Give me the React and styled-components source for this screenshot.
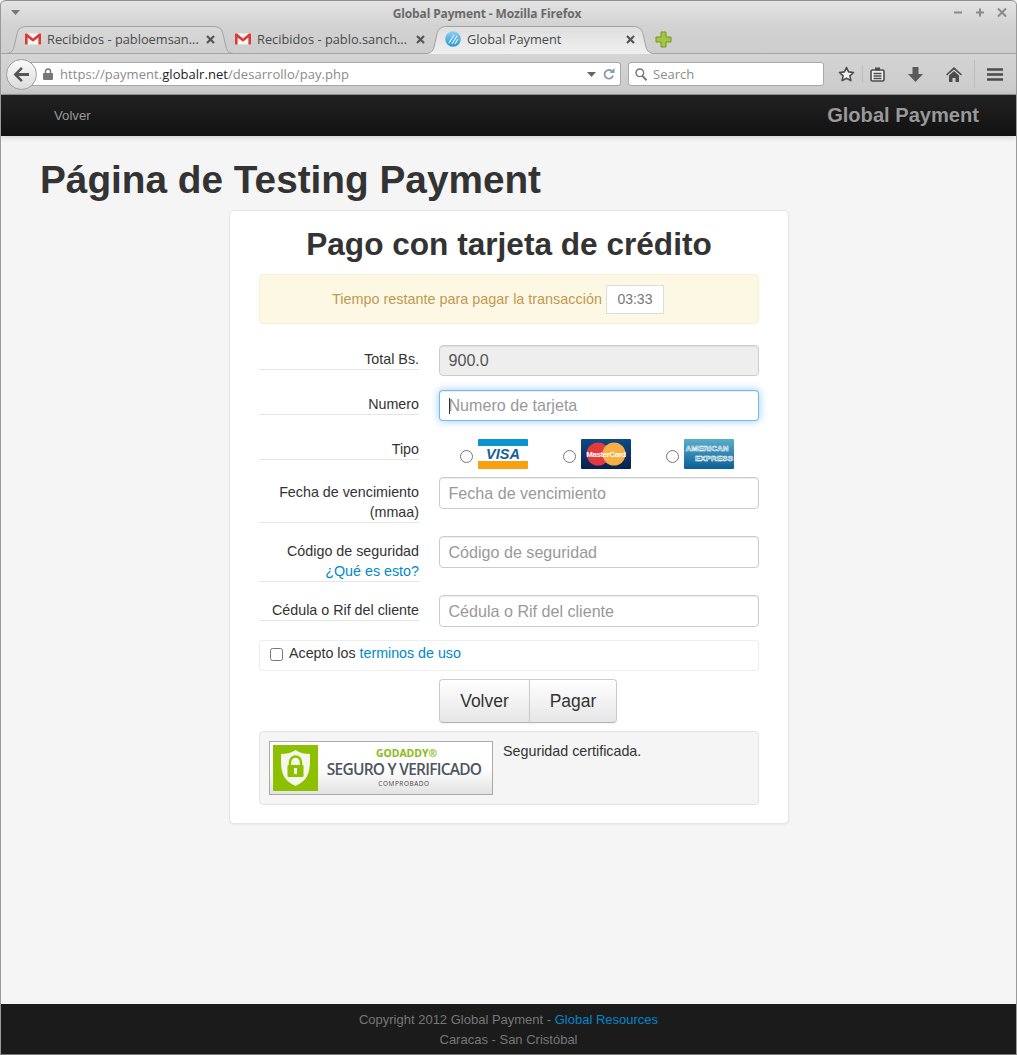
import React from 'react';
import styled, { createGlobalStyle } from 'styled-components';

const Global = createGlobalStyle`
  html, body { margin: 0; padding: 0; background: #f5f5f5; }
  #root { height: 1055px; }
  * { box-sizing: border-box; }
`;
const UI = `"Open Sans", "Noto Sans", sans-serif`;
const WEB = `"Liberation Sans", Arial, sans-serif`;

const Win = styled.div`
  height: 1055px; display: flex; flex-direction: column; overflow: hidden;
  border-left: 1px solid #9a9a9a; border-right: 1px solid #9a9a9a; border-bottom: 1px solid #777;
  border-radius: 5px 5px 0 0; background: #f5f5f5; font-family: ${WEB};
`;
const Chrome = styled.header`
  background: linear-gradient(#e4e4e4 0, #d2d2d2 25px, #cdcdcd 54px, #cccccc 100%);
  border-top: 1px solid #8e8e8e; border-radius: 5px 5px 0 0; flex: none;
`;
const TitleBar = styled.div`
  height: 25px; display: flex; align-items: center; justify-content: space-between; padding: 0 7px 2px 10px;
`;
const Title = styled.div`
  font: 700 12px ${UI}; letter-spacing: -.13px; color: #6a6a6a; position: absolute; left: 0; right: 43px; top: 5px; text-align: center; pointer-events: none;
`;
const WinBtns = styled.div`
  display: flex; gap: 8px; align-items: center; color: #8a8a8a;
`;
const TabStrip = styled.div`
  height: 28px; display: flex; padding-left: 13px; align-items: stretch; border-bottom: 1px solid #a4a4a4;
`;
const TabWrap = styled.div`
  width: 210px; height: 28px; position: relative; display: flex; align-items: center; padding: 0 9px 2px 11px;
  font: 400 12.8px ${UI}; color: #4a4a4a; gap: 6px;
`;
const TabLabel = styled.span`
  flex: 1; white-space: nowrap; position: relative;
`;
const TabIcon = styled.span`
  display: flex; position: relative; width: 16px; height: 16px;
`;
const Shape = styled.svg`
  position: absolute; left: -9px; top: 0;
`;
const Close = styled.svg`
  position: relative; flex: none;
`;
const Plus = styled.svg`
  margin: 5px 0 0 11px;
`;
const NavBar = styled.div`
  height: 41px; display: flex; align-items: center; padding: 0 0 0 5px; border-bottom: 1px solid #989898;
  background: linear-gradient(#d4d4d4, #cbcbcb);
`;
const Back = styled.div`
  width: 31px; height: 31px; border-radius: 50%; flex: none; position: relative; z-index: 1; margin-right: -10px;
  background: linear-gradient(#fafafa, #dcdcdc); border: 1px solid #a0a0a0; display: flex; align-items: center; justify-content: center;
`;
const UrlBar = styled.div`
  width: 594px; height: 24px; background: #fff; border: 1px solid #a8a8a8; border-left: none; border-radius: 0 3px 3px 0;
  display: flex; align-items: center; padding: 0 5px 0 16px; font: 400 13px ${UI}; color: #8c8c8c; letter-spacing: .05px;
`;
const UrlText = styled.span`
  flex: 1; margin-left: 7px; white-space: nowrap;
  b { font-weight: 400; color: #222; }
`;
const SearchBar = styled.div`
  width: 196px; height: 24px; margin-left: 7px; background: #fff; border: 1px solid #a8a8a8; border-radius: 3px;
  display: flex; align-items: center; gap: 6px; padding-left: 6px; font: 400 13px ${UI}; color: #8c8c8c;
`;
const Tools = styled.div`
  display: flex; align-items: center; margin-left: 6px; flex: 1; height: 100%;
`;
const ToolSlot = styled.div`
  width: ${p => p.$w}px; display: flex; justify-content: center; align-items: center;
`;
const Sep = styled.div`
  width: 1px; height: ${p => p.$h}px; background: #bdbdbd;
`;
const Spacer = styled.div`
  width: 6px;
`;

const TopBar = styled.div`
  height: 41px; flex: none; display: flex; align-items: center; justify-content: space-between; padding: 0 37px 0 53px;
  background: linear-gradient(#222222, #111111); box-shadow: 0 1px 6px rgba(0,0,0,.18); position: relative;
`;
const TopLink = styled.a`
  font: 400 13.2px ${WEB}; color: #999; 
`;
const Brand = styled.a`
  font: 700 20.1px ${WEB}; color: #999; text-shadow: 0 1px 0 #111;
`;
const Main = styled.main`
  flex: 1; display: flex; flex-direction: column; padding: 0 39px;
`;
const H1 = styled.h1`
  margin: 24px 0 10px; font: 700 38.75px/40px ${WEB}; color: #333; 
`;
const Card = styled.section`
  width: 560px; margin-left: 189px; height: 614px; background: #fff; border: 1px solid #e5e5e5; border-radius: 5px;
  padding: 13px 29px 0; box-shadow: 0 1px 2px rgba(0,0,0,.05);
`;
const H2 = styled.h2`
  margin: 0 0 10px; font: 700 31.6px/40px ${WEB}; color: #333; text-align: center;
`;
const Alert = styled.div`
  height: 50px; background: #fcf8e3; border: 1px solid #fbeed5; border-radius: 4px; margin-bottom: 21px;
  display: flex; align-items: center; justify-content: center; gap: 4px; font: 400 14.4px ${WEB}; color: #c09853; padding-right: 22px;
`;
const Timer = styled.span`
  width: 58px; height: 29px; background: #fff; border: 1px solid #ddd; display: flex; align-items: center; justify-content: center; color: #777; font-size: 14px;
`;
const Row = styled.div`
  display: flex; align-items: flex-start; gap: 20px; margin-bottom: ${p => p.$mb}px; position: relative;
`;
const Label = styled.label`
  width: 160px; flex: none; margin-top: ${p => p.$mt ?? 4}px; border-bottom: 1px solid #e5e5e5; text-align: right;
  font: 400 14.3px/20px ${WEB}; color: #333;
`;
const Field = styled.input`
  width: 320px; height: ${p => p.$h}px; padding: 0 8px 0 8.5px; border: 1px solid #ccc; border-radius: 4px; outline: none;
  font: 400 16.1px ${WEB}; color: #555; background: #fff; box-shadow: inset 0 1px 1px rgba(0,0,0,.075);
  &::placeholder { color: #999; opacity: 1; }
  &:read-only { caret-color: transparent; }
`;
const FieldDisabled = styled(Field)`
  background: #eee; color: #555;
`;
const FieldFocus = styled(Field)`
  border-color: rgba(82,168,236,.8); box-shadow: inset 0 1px 1px rgba(0,0,0,.075), 0 0 8px rgba(82,168,236,.6);
`;
const Caret = styled.span`
  position: absolute; left: 190px; top: 8px; width: 1px; height: 16px; background: #333;
`;
const Link = styled.a`
  color: #0088cc;
`;
const Cards = styled.div`
  width: 320px; display: flex; padding: 4px 0 0 1px;
`;
const CardOpt = styled.div`
  width: ${p => p.$w}px; display: flex; align-items: flex-end; gap: 5px; padding-left: 20px;
`;
const Radio = styled.input`
  margin: 0 0 6px; width: 13px; height: 13px; flex: none;
`;
const Terms = styled.div`
  height: 31px; border: 1px solid #eee; border-radius: 3px; display: flex; align-items: flex-start; gap: 6px;
  padding: 2px 0 0 10px; font: 400 14.25px/20px ${WEB}; color: #333; margin-bottom: 8px;
`;
const Check = styled.input`
  margin: 5px 0 0; width: 13px; height: 13px;
`;
const Btns = styled.div`
  display: flex; margin: 0 0 8px 180px;
`;
const Btn = styled.button`
  height: 44px; width: ${p => p.$w}px; font: 400 17.5px ${WEB}; color: #333; background: linear-gradient(#ffffff, #e6e6e6);
  border: 1px solid #ccc; border-bottom-color: #b3b3b3; margin-left: ${p => p.$ml ?? 0}px;
  border-radius: ${p => p.$r}; box-shadow: inset 0 1px 0 rgba(255,255,255,.2), 0 1px 2px rgba(0,0,0,.05); padding: 0;
`;
const Well = styled.div`
  height: 74px; background: #f5f5f5; border: 1px solid #e3e3e3; border-radius: 4px; padding: 9px 9px;
  display: flex; gap: 10px; font: 400 14.3px/20px ${WEB}; color: #333;
`;
const Badge = styled.div`
  width: 224px; height: 54px; border: 1px solid #aaa; padding: 3px; background: linear-gradient(#fff 50%, #e2e2e2);
  display: flex; flex: none;
`;
const BadgeLogo = styled.div`
  width: 45px; height: 46px; background: #8cc000; flex: none; display: flex; align-items: center; justify-content: center;
`;
const BadgeText = styled.div`
  flex: 1; display: flex; flex-direction: column; align-items: center; padding: 2px 0 0 1px;
`;
const BG = styled.span`
  font: 700 10.4px/12px ${UI}; color: #88bb11; margin-left: 5px;
`;
const BS = styled.span`
  font: 600 15.5px/20px ${UI}; color: #4c5560; letter-spacing: -.75px; white-space: nowrap;
`;
const BC = styled.span`
  font: 400 6.4px/8px ${UI}; color: #444; letter-spacing: .6px; margin-top: 1px;
`;
const Footer = styled.footer`
  height: 50px; flex: none; background: #1b1b1b; text-align: center; font: 400 13px/20px ${WEB}; color: #777; padding-top: 6px;
`;

const tabPath = w => `M0 27.5 C6 27.5 8 25 9 21 L12 8 C13 3 16 .5 22 .5 H${w - 22} C${w - 16} .5 ${w - 13} 3 ${w - 12} 8 L${w - 9} 21 C${w - 8} 25 ${w - 6} 27.5 ${w} 27.5`;

const TabShape = ({ active, w = 230 }) => (
  <Shape width={w} height={28} viewBox={`0 0 ${w} 28`}>
    <defs>
      <linearGradient id={active ? 'ta' : 'ti'} x1="0" y1="0" x2="0" y2="1">
        <stop offset="0" stopColor={active ? '#dedede' : '#d8d8d8'} />
        <stop offset="1" stopColor={active ? '#f0f0f0' : '#cfcfcf'} />
      </linearGradient>
    </defs>
    <path d={tabPath(w) + (active ? ` V28 H0Z` : ` V27 H0Z`)} fill={`url(#${active ? 'ta' : 'ti'})`} />
    <path d={tabPath(w)} fill="none" stroke="#a2a2a2" />
  </Shape>
);
const Gmail = () => (
  <svg width="16" height="16" viewBox="0 0 16 16">
    <rect x="0" y="2.5" width="16" height="11" fill="#f5f5f5" />
    <path d="M0 2.5h2l6 5 6-5h2v11h-2.6V6.5L8 10.8 2.6 6.5v7H0z" fill="#dd3a34" />
  </svg>
);
const Globe = () => (
  <svg width="16" height="16" viewBox="0 0 16 16">
    <defs><linearGradient id="gl" x1="0" y1="0" x2="0" y2="1"><stop offset="0" stopColor="#8fd0f0" /><stop offset="1" stopColor="#2a95d5" /></linearGradient></defs>
    <circle cx="8" cy="8" r="7.8" fill="url(#gl)" />
    <path d="M4 12 9 4M7 13l5-8M10 13l3-5" stroke="#e8f6fc" strokeWidth="1.1" fill="none" />
  </svg>
);
const X = () => (
  <Close width="9" height="9" viewBox="0 0 9 9"><path d="M1 1l7 7M8 1L1 8" stroke="#555" strokeWidth="2.2" /></Close>
);
const Tab = ({ icon, children, shape, active }) => (
  <TabWrap>
    {shape && <TabShape active={active} />}
    <TabIcon>{icon}</TabIcon>
    <TabLabel>{children}</TabLabel>
    <X />
  </TabWrap>
);
const Visa = () => (
  <svg width="50" height="30" viewBox="0 0 50 30">
    <rect width="50" height="30" rx="1" fill="#fff" />
    <path d="M0 7V1a1 1 0 0 1 1-1h48a1 1 0 0 1 1 1v6z" fill="#0a93d0" />
    <path d="M0 22h50v7a1 1 0 0 1-1 1H1a1 1 0 0 1-1-1z" fill="#f9a010" />
    <text x="25" y="20" textAnchor="middle" fontFamily="Liberation Sans" fontStyle="italic" fontWeight="700" fontSize="14.5" fill="#15609c">VISA</text>
  </svg>
);
const Master = () => (
  <svg width="50" height="30" viewBox="0 0 50 30">
    <defs><linearGradient id="mc" x1="0" y1="0" x2="0" y2="1"><stop offset="0" stopColor="#0d4a86" /><stop offset="1" stopColor="#08214f" /></linearGradient></defs>
    <rect width="50" height="30" rx="1" fill="url(#mc)" />
    <circle cx="17" cy="15" r="11.5" fill="#e23a3e" />
    <circle cx="33" cy="15" r="11.5" fill="#f7b044" />
    <text x="25" y="18" textAnchor="middle" fontFamily="Liberation Sans" fontWeight="700" fontSize="8" letterSpacing="-.45" fill="#fff">MasterCard</text>
  </svg>
);
const Amex = () => (
  <svg width="50" height="30" viewBox="0 0 50 30">
    <defs><linearGradient id="am" x1="0" y1="0" x2="0" y2="1"><stop offset="0" stopColor="#5aaecb" /><stop offset="1" stopColor="#0b5f96" /></linearGradient></defs>
    <rect width="50" height="30" rx="1" fill="url(#am)" />
    <text x="1.5" y="12" fontFamily="Liberation Sans" fontWeight="700" fontSize="8" textLength="43" lengthAdjust="spacingAndGlyphs" fill="#2f7fae" stroke="#fff" strokeWidth=".55">AMERICAN</text>
    <text x="11" y="22" fontFamily="Liberation Sans" fontWeight="700" fontSize="8" textLength="38" lengthAdjust="spacingAndGlyphs" fill="#2f7fae" stroke="#fff" strokeWidth=".55">EXPRESS</text>
  </svg>
);

export default function App() {
  return (
    <Win>
      <Global />
      <Chrome>
        <TitleBar>
          <svg width="9" height="5" viewBox="0 0 9 5"><path d="M0 0h9L4.5 5z" fill="#777" /></svg>
          <Title>Global Payment - Mozilla Firefox</Title>
          <WinBtns>
            <svg width="14" height="9" viewBox="0 0 14 9"><path d="M3 4.5h8" stroke="#8a8a8a" strokeWidth="2" /></svg>
            <svg width="14" height="9" viewBox="0 0 14 9"><path d="M3 4.5h8M7 .5v8" stroke="#8a8a8a" strokeWidth="2" /></svg>
            <svg width="14" height="9" viewBox="0 0 14 9"><path d="M3 .5l8 8M11 .5l-8 8" stroke="#8a8a8a" strokeWidth="2" /></svg>
          </WinBtns>
        </TitleBar>
        <TabStrip>
          <Tab icon={<Gmail />} shape>Recibidos - pabloemsan...</Tab>
          <Tab icon={<Gmail />}>Recibidos - pablo.sanch...</Tab>
          <Tab icon={<Globe />} shape active>Global Payment</Tab>
          <Plus width="17" height="17" viewBox="0 0 17 17">
            <path d="M6 1h5v5h5v5h-5v5H6v-5H1V6h5z" fill="#a4c639" stroke="#76952a" />
          </Plus>
        </TabStrip>
        <NavBar>
          <Back>
            <svg width="17" height="15" viewBox="0 0 17 15"><path d="M8 0l1.8 1.8L5.6 6H16v3H5.6l4.2 4.2L8 15 .5 7.5z" fill="#555" /></svg>
          </Back>
          <UrlBar>
            <svg width="10" height="12" viewBox="0 0 10 12"><path d="M2.5 5V3.5a2.5 2.5 0 0 1 5 0V5" fill="none" stroke="#777" strokeWidth="1.5" /><rect y="5" width="10" height="7" rx="1" fill="#777" /></svg>
            <UrlText>https://payment.<b>globalr.net</b>/desarrollo/pay.php</UrlText>
            <svg width="9" height="5" viewBox="0 0 9 5"><path d="M0 0h9L4.5 5z" fill="#666" /></svg>
            <svg style={{ marginLeft: 7 }} width="12" height="12" viewBox="0 0 12 12"><path d="M10 7.5A4.3 4.3 0 1 1 8.6 3" fill="none" stroke="#8a9aa8" strokeWidth="1.8" /><path d="M6.5 4.8L11.5 5V0z" fill="#8a9aa8" /></svg>
          </UrlBar>
          <SearchBar>
            <svg width="12" height="13" viewBox="0 0 12 13"><circle cx="4.8" cy="4.8" r="3.8" fill="none" stroke="#777" strokeWidth="1.4" /><path d="M7.5 7.8l4 4.5" stroke="#777" strokeWidth="2" /></svg>
            Search
          </SearchBar>
          <Tools>
            <ToolSlot $w="32"><svg width="17" height="16" viewBox="0 0 17 16"><path d="M8.5 1.5l2.1 4.4 4.9.6-3.6 3.3.9 4.8-4.3-2.4-4.3 2.4.9-4.8L1.5 6.5l4.9-.6z" fill="#f2f2f2" stroke="#4c4c4c" strokeWidth="1.6" strokeLinejoin="round" /></svg></ToolSlot>
            <Sep $h={18} />
            <ToolSlot $w="28"><svg width="15" height="15" viewBox="0 0 15 15"><rect x="1" y="3" width="13" height="11" rx="1.5" fill="#eee" stroke="#4c4c4c" strokeWidth="1.6" /><rect x="5" y=".5" width="5" height="3" fill="#4c4c4c" /><path d="M3.5 6.5h8M3.5 9h8M3.5 11.5h8" stroke="#4c4c4c" strokeWidth="1.3" /></svg></ToolSlot>
            <ToolSlot $w="48"><svg width="15" height="15" viewBox="0 0 15 15"><path d="M4.5 0h6v7h4.5L7.5 15 0 7h4.5z" fill="#5a5a5a" /></svg></ToolSlot>
            <ToolSlot $w="29"><svg width="16" height="15" viewBox="0 0 16 15"><path d="M8 0l8 7.5-1 1L8 2.5 1 8.5l-1-1z" fill="#4c4c4c" /><path d="M3 8.5L8 4l5 4.5V15H9.5v-4h-3v4H3z" fill="#4c4c4c" /></svg></ToolSlot>
            <Spacer />
            <Sep $h={28} />
            <ToolSlot $w="40"><svg width="16" height="13" viewBox="0 0 16 13"><path d="M0 1.5h16M0 6.5h16M0 11.5h16" stroke="#4c4c4c" strokeWidth="2.4" /></svg></ToolSlot>
          </Tools>
        </NavBar>
      </Chrome>
      <TopBar>
        <TopLink>Volver</TopLink>
        <Brand>Global Payment</Brand>
      </TopBar>
      <Main>
        <H1>Página de Testing Payment</H1>
        <Card>
          <H2>Pago con tarjeta de crédito</H2>
          <Alert>Tiempo restante para pagar la transacción <Timer>03:33</Timer></Alert>
          <Row $mb={14}>
            <Label>Total Bs.</Label>
            <FieldDisabled $h={31} readOnly value="900.0" />
          </Row>
          <Row $mb={14}>
            <Label>Numero</Label>
            <FieldFocus $h={31} readOnly placeholder="Numero de tarjeta" />
            <Caret />
          </Row>
          <Row $mb={8}>
            <Label>Tipo</Label>
            <Cards>
              <CardOpt $w={103}><Radio type="radio" name="t" /><Visa /></CardOpt>
              <CardOpt $w={103}><Radio type="radio" name="t" /><Master /></CardOpt>
              <CardOpt $w={113}><Radio type="radio" name="t" /><Amex /></CardOpt>
            </Cards>
          </Row>
          <Row $mb={13}>
            <Label $mt={5}>Fecha de vencimiento (mmaa)</Label>
            <Field $h={32} readOnly placeholder="Fecha de vencimiento" />
          </Row>
          <Row $mb={13}>
            <Label $mt={5}>Código de seguridad<br /><Link>¿Qué es esto?</Link></Label>
            <Field $h={32} readOnly placeholder="Código de seguridad" />
          </Row>
          <Row $mb={13}>
            <Label $mt={5}>Cédula o Rif del cliente</Label>
            <Field $h={32} readOnly placeholder="Cédula o Rif del cliente" />
          </Row>
          <Terms><Check type="checkbox" /><span>Acepto los <Link>terminos de uso</Link></span></Terms>
          <Btns>
            <Btn $w={91} $r="4px 0 0 4px">Volver</Btn>
            <Btn $w={88} $ml={-1} $r="0 4px 4px 0">Pagar</Btn>
          </Btns>
          <Well>
            <Badge>
              <BadgeLogo>
                <svg width="29" height="36" viewBox="0 0 29 36">
                  <path d="M14.5 0C19 3 24 4 29 4c0 14 1 25-14.5 32C-1 29 0 18 0 4c5 0 10-1 14.5-4z" fill="#f4f7ea" />
                  <path d="M9 16v-4a5.5 5.5 0 0 1 11 0v4" fill="none" stroke="#8cc000" strokeWidth="2.4" />
                  <rect x="6.5" y="15" width="16" height="12" rx="1" fill="#8cc000" />
                  <rect x="13" y="18" width="3" height="6" fill="#f4f7ea" />
                </svg>
              </BadgeLogo>
              <BadgeText>
                <BG>GODADDY®</BG>
                <BS>SEGURO Y VERIFICADO</BS>
                <BC>COMPROBADO</BC>
              </BadgeText>
            </Badge>
            <span>Seguridad certificada.</span>
          </Well>
        </Card>
      </Main>
      <Footer>
        Copyright 2012 Global Payment - <Link>Global Resources</Link><br />Caracas - San Cristóbal
      </Footer>
    </Win>
  );
}
